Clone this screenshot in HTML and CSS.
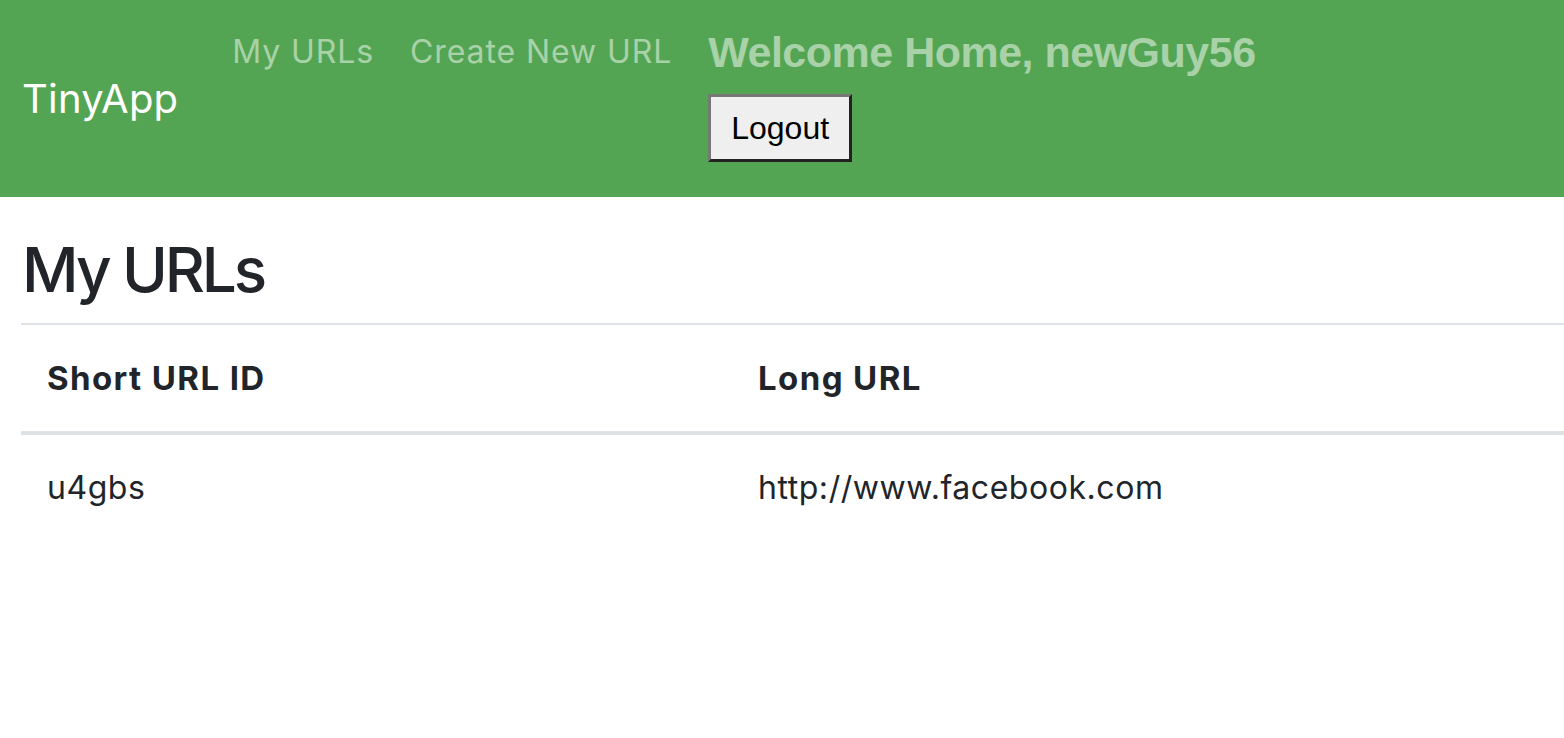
FILE: index.html
```html
<!DOCTYPE html>
<html lang="en">
<head>
<meta charset="utf-8">
<title>TinyApp</title>
<link rel="stylesheet" href="styles.css">
</head>
<body>
<nav class="navbar">
  <a class="brand" href="#">TinyApp</a>
  <ul class="nav-list">
    <li><a class="nav-link" href="#">My URLs</a></li>
    <li><a class="nav-link" href="#">Create New URL</a></li>
    <li class="user-block">
      <h3 class="welcome">Welcome Home, newGuy56</h3>
      <form class="logout-form"><button class="logout-btn" type="button">Logout</button></form>
    </li>
  </ul>
</nav>
<main class="main">
  <h1 class="page-title">My URLs</h1>
  <table class="url-table">
    <thead>
      <tr><th class="col-short">Short URL ID</th><th>Long URL</th></tr>
    </thead>
    <tbody>
      <tr><td>u4gbs</td><td>http://www.facebook.com</td></tr>
    </tbody>
  </table>
</main>
</body>
</html>
```
FILE: styles.css
```css
html, body {
  margin: 0;
  padding: 0;
  background: #fff;
}
body {
  font-family: Inter, "Noto Sans", sans-serif;
  color: #212529;
  font-size: 32px;
  line-height: 1.5;
}
.navbar {
  display: flex;
  align-items: center;
  height: 197px;
  box-sizing: border-box;
  padding: 0 22px;
  background: #53a553;
}
.brand {
  font-size: 40px;
  line-height: 60px;
  letter-spacing: 0.2px;
  color: #fff;
  text-decoration: none;
  margin-right: 36px;
}
.nav-list {
  display: flex;
  align-items: flex-start;
  list-style: none;
  margin: 0 0 9px 0;
  padding: 0;
}
.nav-link {
  display: block;
  padding: 6px 18px 2px 18px;
  color: rgba(255, 255, 255, 0.5);
  text-decoration: none;
  line-height: 40px;
  letter-spacing: 0.9px;
}
.user-block {
  padding-left: 18px;
}
.welcome {
  margin: 0 0 16px 0;
  font-family: "Liberation Sans", Arial, sans-serif;
  font-weight: bold;
  font-size: 43px;
  letter-spacing: -0.5px;
  line-height: 52px;
  color: rgba(255, 255, 255, 0.5);
}
.logout-form {
  margin: 0;
}
.logout-btn {
  font-family: "Liberation Sans", Arial, sans-serif;
  font-size: 32px;
  line-height: 38px;
  color: #000;
  background: #efefef;
  border: 3px solid #777;
  border-right-color: #222;
  border-bottom-color: #222;
  padding: 12px 20px;
  margin: 0;
}
.main {
  padding: 0 0 0 21px;
}
.page-title {
  margin: 36px 0 16px 1px;
  font-size: 62px;
  font-weight: 500;
  letter-spacing: -3.1px;
  line-height: 74px;
}
.url-table {
  width: 100%;
  border-collapse: collapse;
}
.url-table th,
.url-table td {
  text-align: left;
  padding: 29px 26px;
  line-height: 48px;
  letter-spacing: 0.55px;
  border-top: 2px solid #dee2e6;
}
.url-table th {
  font-weight: 700;
  font-size: 33px;
  letter-spacing: 1.4px;
  border-bottom: 4px solid #dee2e6;
}
.url-table tbody td {
  border-top: none;
}
.col-short {
  width: 659px;
}
```
